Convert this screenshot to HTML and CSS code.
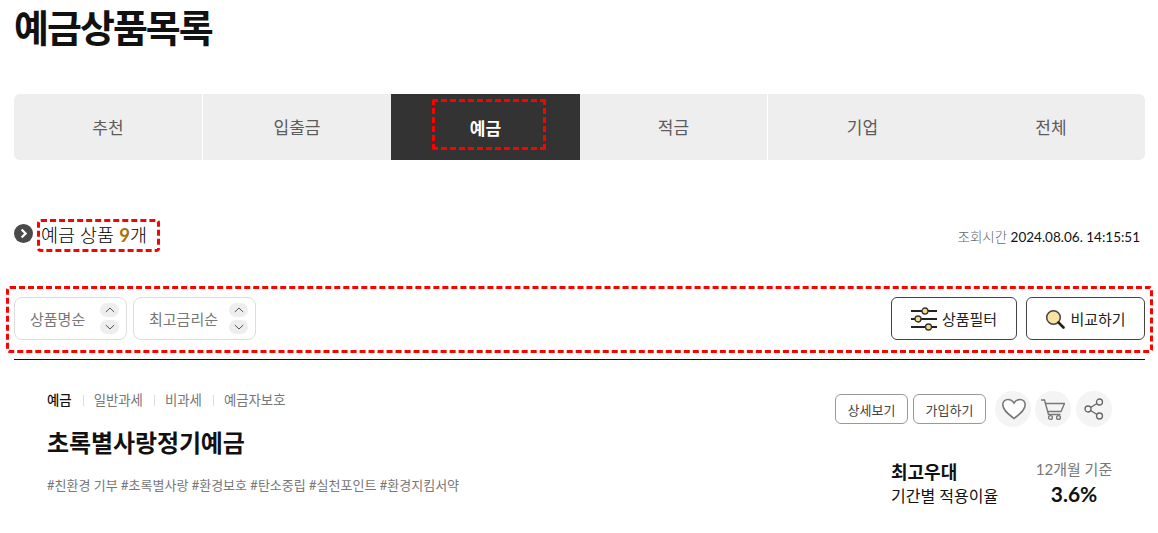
FILE: index.html
```html
<!DOCTYPE html>
<html lang="ko">
<head>
<meta charset="utf-8">
<title>예금상품목록</title>
<link rel="stylesheet" href="styles.css">
</head>
<body>
<main class="page">
  <h1 class="page-title">예금상품목록</h1>
  <nav class="tabs">
    <a class="tab tab-sep">추천</a>
    <a class="tab">입출금</a>
    <a class="tab tab-active"><span class="tab-mark">예금</span></a>
    <a class="tab tab-sep">적금</a>
    <a class="tab">기업</a>
    <a class="tab">전체</a>
  </nav>
  <div class="summary">
    <div class="summary-left">
      <svg class="bullet" viewBox="0 0 20 20" width="19" height="19"><circle cx="10" cy="10" r="10" fill="#4a4a4a"/><path d="M8 5.8 12.2 10 8 14.2" fill="none" stroke="#fff" stroke-width="2.4"/></svg>
      <p class="count">예금 상품 <b>9</b>개</p>
    </div>
    <p class="time"><span class="time-label">조회시간</span> 2024.08.06. 14:15:51</p>
  </div>
  <div class="toolbar">
    <div class="sorts">
      <div class="sort sort-a">
        <span>상품명순</span>
        <span class="arrows">
          <i class="arrow"><svg viewBox="0 0 10 6" width="10" height="6"><path d="M.8 5 5 1l4.200 4"/></svg></i>
          <i class="arrow"><svg viewBox="0 0 10 6" width="10" height="6"><path d="M.8 1 5 5l4.200-4"/></svg></i>
        </span>
      </div>
      <div class="sort sort-b">
        <span>최고금리순</span>
        <span class="arrows">
          <i class="arrow"><svg viewBox="0 0 10 6" width="10" height="6"><path d="M.8 5 5 1l4.200 4"/></svg></i>
          <i class="arrow"><svg viewBox="0 0 10 6" width="10" height="6"><path d="M.8 1 5 5l4.200-4"/></svg></i>
        </span>
      </div>
    </div>
    <div class="actions">
      <button class="action action-filter">
        <svg viewBox="0 0 26 24" width="26" height="24"><g fill="none" stroke="#222" stroke-width="2"><path d="M0 4h26M0 12h26M0 20h26"/></g><g fill="#f7dc8e" stroke="#333" stroke-width="1.300"><circle cx="14" cy="4" r="3"/><circle cx="7" cy="12" r="3"/><circle cx="17.500" cy="20" r="3"/></g></svg>
        상품필터
      </button>
      <button class="action action-compare">
        <svg viewBox="0 0 20 20" width="20" height="20"><circle cx="8.500" cy="8.500" r="6.800" fill="#f8e3a3" stroke="#444" stroke-width="1.500"/><path d="M13.500 13.500 18.500 18.500" stroke="#222" stroke-width="2.600" stroke-linecap="round"/></svg>
        비교하기
      </button>
    </div>
  </div>
  <hr class="rule">
  <article class="product">
    <div class="product-main">
      <ul class="labels">
        <li class="label-main">예금</li>
        <li>일반과세</li>
        <li>비과세</li>
        <li>예금자보호</li>
      </ul>
      <h2 class="product-name">초록별사랑정기예금</h2>
      <p class="hashes">#친환경 기부 #초록별사랑 #환경보호 #탄소중립 #실천포인트 #환경지킴서약</p>
    </div>
    <div class="product-side">
      <div class="controls">
        <a class="small-btn">상세보기</a>
        <a class="small-btn">가입하기</a>
        <span class="round">
          <svg class="heart" viewBox="0 0 26 24" width="26" height="24"><path d="M13 21.500C8 17.500 1.800 13.500 1.800 7.800 1.800 4.500 4.300 2.500 7 2.500c2.500 0 4.600 1.300 6 3.500 1.400-2.200 3.500-3.500 6-3.500 2.700 0 5.200 2 5.200 5.300C24.200 13.500 18 17.500 13 21.500Z" fill="#fff" stroke="#777" stroke-width="1.600"/></svg>
        </span>
        <span class="round">
          <svg viewBox="0 0 24 24" width="24" height="24"><g fill="none" stroke="#777" stroke-width="1.400"><path d="M0 3h3.500l4 14.500h12"/><path d="M4.500 6.500h19L20 14.500H6.600"/><circle cx="9.500" cy="20.500" r="1.900"/><circle cx="17.500" cy="20.500" r="1.900"/></g></svg>
        </span>
        <span class="round round-last">
          <svg viewBox="0 0 20 22" width="20" height="22"><g fill="none" stroke="#666" stroke-width="1.300"><circle cx="15.500" cy="4" r="3"/><circle cx="4" cy="11" r="3"/><circle cx="15.500" cy="18" r="3"/><path d="M6.600 9.500 13 5.500M6.600 12.500 13 16.500"/></g></svg>
        </span>
      </div>
      <div class="rates">
        <div class="rate-left">
          <strong class="rate-title">최고우대</strong>
          <span class="rate-sub">기간별 적용이율</span>
        </div>
        <div class="rate-right">
          <span class="rate-term">12개월 기준</span>
          <strong class="rate-value">3.6%</strong>
        </div>
      </div>
    </div>
  </article>
</main>
</body>
</html>
```
FILE: styles.css
```css
* { box-sizing: border-box; }
html, body { margin: 0; padding: 0; background: #fff; }
body {
  font-family: Lato, "Noto Sans CJK KR", "Noto Sans", sans-serif;
  color: #111;
  overflow: hidden;
  height: 533px;
}
p, h1, h2, ul { margin: 0; padding: 0; }
.page { padding: 0 13px 0 14px; }

.page-title {
  font-size: 38px;
  line-height: 54px;
  height: 94px;
  letter-spacing: -2px;
  font-weight: 700;
  color: #111;
}

.tabs {
  display: grid;
  grid-template-columns: 189px 188px 189px 188px 189px 188px;
  height: 66px;
  background: #eee;
  border-radius: 6px;
  overflow: hidden;
}
.tab {
  display: flex;
  align-items: center;
  justify-content: center;
  padding-bottom: 2px;
  font-size: 17px;
  color: #5c5c5c;
  font-weight: 400;
}
.tab-sep { border-right: 1px solid #fff; }
.tab-active { background: #333; color: #fff; font-weight: 700; padding-bottom: 0; }
.tab-mark {
  display: flex;
  align-items: center;
  justify-content: center;
  width: 114px;
  height: 51px;
  border: 3px dashed #f00;
  border-radius: 2px;
  margin: -5px 0 0 7px;
  padding: 5px 7px 0 0;
}

.summary {
  display: flex;
  justify-content: space-between;
  align-items: flex-start;
  padding: 59px 5px 0 0;
  height: 126px;
}
.summary-left { display: flex; align-items: flex-start; gap: 4px; }
.bullet { display: block; margin-top: 5px; }
.count {
  font-size: 18.500px;
  line-height: 27px;
  height: 33px;
  width: 123px;
  border: 3px dashed #f00;
  border-radius: 4px;
  padding: 0 0 0 1px;
  font-weight: 300;
  color: #000;
  white-space: nowrap;
}
.count b { color: #a67200; font-weight: 700; }
.time { font-size: 13.500px; line-height: 20px; font-weight: 400; color: #111; padding-top: 8px; }
.time-label { color: #666; font-weight: 300; }

.toolbar {
  display: flex;
  justify-content: space-between;
  align-items: flex-start;
  margin: 0 -8px;
  height: 67px;
  border: 3px dashed #f00;
  border-radius: 4px;
  padding: 8px 5px 0;
}
.sorts { display: flex; gap: 6px; }
.sort {
  display: flex;
  align-items: center;
  justify-content: space-between;
  height: 43px;
  padding: 0 7px 0 15px;
  border: 1px solid #ddd;
  border-radius: 8px;
  font-size: 15px;
  color: #777;
}
.sort-a { width: 113px; }
.sort-b { width: 123px; }
.arrows { display: flex; flex-direction: column; gap: 3px; }
.arrow {
  display: flex;
  align-items: center;
  justify-content: center;
  width: 19px;
  height: 14px;
  border-radius: 7px;
  background: #eee;
}
.arrow svg path { fill: none; stroke: #555; stroke-width: 1; }

.actions { display: flex; gap: 9px; }
.action {
  display: flex;
  align-items: center;
  justify-content: center;
  gap: 5px;
  height: 43px;
  padding: 0;
  background: #fff;
  border: 1px solid #444;
  border-radius: 6px;
  font: inherit;
  font-size: 15px;
  color: #222;
}
.action-filter { width: 126px; }
.action-compare { width: 119px; }

.rule { margin: 6px 0 0; height: 1px; border: 0; background: #111; }

.product {
  display: flex;
  justify-content: space-between;
  padding: 32px 33px 0;
}
.labels {
  display: flex;
  list-style: none;
  font-size: 13.400px;
  line-height: 16px;
  color: #777;
}
.labels li { position: relative; padding: 0 11px; }
.labels li:first-child { padding-left: 0; }
.labels li + li::before {
  content: "";
  position: absolute;
  left: 0;
  top: 3px;
  width: 1px;
  height: 11px;
  background: #ddd;
}
.labels .label-main { color: #111; font-weight: 500; }
.product-name { font-size: 24px; line-height: 36px; margin-top: 17px; color: #111; font-weight: 700; letter-spacing: -.1px; }
.hashes { font-size: 13px; line-height: 20px; margin-top: 14px; color: #777; }

.product-side { width: 277px; margin-top: -1px; }
.controls { display: flex; align-items: center; }
.small-btn {
  display: flex;
  align-items: center;
  justify-content: center;
  width: 73px;
  height: 30px;
  margin-right: 5px;
  border: 1px solid #999;
  border-radius: 6px;
  font-size: 13px;
  color: #444;
}
.round {
  display: flex;
  align-items: center;
  justify-content: center;
  width: 36px;
  height: 36px;
  margin-left: 4px;
  border-radius: 50%;
  background: #f4f4f4;
}
.round-last { margin-left: 5px; }
.heart { margin-left: 2px; }
.rates { display: flex; justify-content: space-between; margin: 30px 0 0 56px; }
.rate-left, .rate-right { display: flex; flex-direction: column; }
.rate-right { align-items: center; width: 76px; }
.rate-title { font-size: 18px; line-height: 26px; font-weight: 700; padding-top: 2px; box-sizing: content-box; }
.rate-sub { font-size: 16px; line-height: 22px; color: #111; font-weight: 400; }
.rate-term { font-size: 15px; line-height: 24px; color: #777; white-space: nowrap; }
.rate-value { font-size: 21px; line-height: 26px; font-weight: 700; color: #111; }
```
